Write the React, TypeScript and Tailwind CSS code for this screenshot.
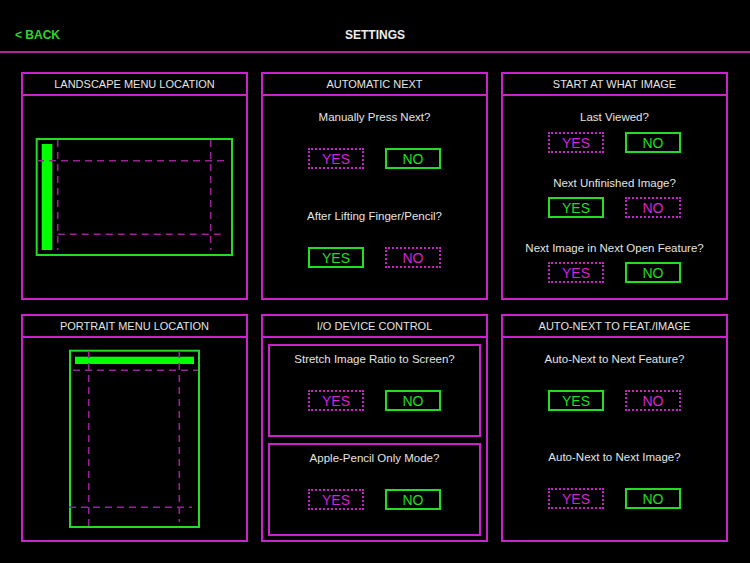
import React from "react";

const FONT = { fontFamily: '"Liberation Sans", Arial, sans-serif' };

function Btn({ label, on }: { label: string; on: boolean }) {
  return (
    <div
      className={
        on
          ? "w-[56px] h-[21px] border-2 border-solid border-[#22dd22] text-[#22dd22] flex items-center justify-center text-[14px] leading-none"
          : "w-[56px] h-[21px] border-2 border-dotted border-[#c422c4] text-[#d424d4] flex items-center justify-center text-[14px] leading-none"
      }
    >
      {label}
    </div>
  );
}

function Pair({ yes }: { yes: boolean }) {
  return (
    <div className="flex justify-center gap-[21px]">
      <Btn label="YES" on={yes} />
      <Btn label="NO" on={!yes} />
    </div>
  );
}

function Q({ children }: { children: React.ReactNode }) {
  return (
    <div className="text-center text-[11.5px] leading-[14px] text-[#e4e4e4]">{children}</div>
  );
}

function Panel({ title, children }: { title: string; children: React.ReactNode }) {
  return (
    <div className="h-[228px] border-2 border-[#cc22cc] flex flex-col">
      <div className="h-[22px] border-b-2 border-[#cc22cc] flex items-center justify-center text-[11px] text-[#e4e4e4] leading-none">
        {title}
      </div>
      <div className="flex-1 relative">{children}</div>
    </div>
  );
}

const DASH = "#9c1f9c";

function Landscape() {
  return (
    <svg width="223" height="202" className="block">
      <rect x="13.7" y="43" width="195.3" height="116" fill="none" stroke="#22dd22" strokeWidth="2" />
      <rect x="18.7" y="48" width="10.6" height="106" fill="#00ff00" />
      <g stroke={DASH} strokeWidth="1.6" strokeDasharray="7 5" fill="none">
        <line x1="34.7" y1="44" x2="34.7" y2="154" />
        <line x1="187.7" y1="44" x2="187.7" y2="154" />
        <line x1="14" y1="64.7" x2="206" y2="64.7" />
        <line x1="34.7" y1="138.3" x2="202" y2="138.3" />
      </g>
    </svg>
  );
}

function Portrait() {
  return (
    <svg width="223" height="202" className="block">
      <rect x="47" y="12.7" width="129" height="176.3" fill="none" stroke="#22dd22" strokeWidth="2" />
      <rect x="52" y="18.7" width="119" height="7.3" fill="#00ff00" />
      <g stroke={DASH} strokeWidth="1.6" strokeDasharray="7 5" fill="none">
        <line x1="65.7" y1="13" x2="65.7" y2="188" />
        <line x1="156.3" y1="13" x2="156.3" y2="184" />
        <line x1="50" y1="32.3" x2="175" y2="32.3" />
        <line x1="46" y1="169.3" x2="169" y2="169.3" />
      </g>
    </svg>
  );
}

export default function App() {
  return (
    <div className="w-[750px] h-[563px] bg-black overflow-hidden" style={FONT}>
      <div className="h-[53px] border-b-2 border-[#b0249c] relative flex items-center justify-center pt-[19px]">
        <div className="absolute left-[15px] top-[28px] text-[12px] leading-[14px] font-bold text-[#2bd42b]">
          &lt; BACK
        </div>
        <div className="text-[12px] leading-[14px] font-bold text-[#ececec]">SETTINGS</div>
      </div>

      <div className="mt-[19px] ml-[21px] grid grid-cols-[227px_227px_227px] gap-x-[13px] gap-y-[14px]">
        <Panel title="LANDSCAPE MENU LOCATION">
          <Landscape />
        </Panel>

        <Panel title="AUTOMATIC NEXT">
          <div className="pt-[14px]">
            <Q>Manually Press Next?</Q>
            <div className="mt-[24px]">
              <Pair yes={false} />
            </div>
            <div className="mt-[40px]">
              <Q>After Lifting Finger/Pencil?</Q>
            </div>
            <div className="mt-[24px]">
              <Pair yes={true} />
            </div>
          </div>
        </Panel>

        <Panel title="START AT WHAT IMAGE">
          <div className="pt-[14px]">
            <Q>Last Viewed?</Q>
            <div className="mt-[8px]">
              <Pair yes={false} />
            </div>
            <div className="mt-[23px]">
              <Q>Next Unfinished Image?</Q>
            </div>
            <div className="mt-[7px]">
              <Pair yes={true} />
            </div>
            <div className="mt-[23px]">
              <Q>Next Image in Next Open Feature?</Q>
            </div>
            <div className="mt-[7px]">
              <Pair yes={false} />
            </div>
          </div>
        </Panel>

        <Panel title="PORTRAIT MENU LOCATION">
          <Portrait />
        </Panel>

        <Panel title="I/O DEVICE CONTROL">
          <div className="px-[5px] pt-[6px] flex flex-col gap-[6px]">
            <div className="h-[93px] border-2 border-[#cc22cc] pt-[6px]">
              <Q>Stretch Image Ratio to Screen?</Q>
              <div className="mt-[24px]">
                <Pair yes={false} />
              </div>
            </div>
            <div className="h-[93px] border-2 border-[#cc22cc] pt-[6px]">
              <Q>Apple-Pencil Only Mode?</Q>
              <div className="mt-[24px]">
                <Pair yes={false} />
              </div>
            </div>
          </div>
        </Panel>

        <Panel title="AUTO-NEXT TO FEAT./IMAGE">
          <div className="pt-[14px]">
            <Q>Auto-Next to Next Feature?</Q>
            <div className="mt-[24px]">
              <Pair yes={true} />
            </div>
            <div className="mt-[39px]">
              <Q>Auto-Next to Next Image?</Q>
            </div>
            <div className="mt-[24px]">
              <Pair yes={false} />
            </div>
          </div>
        </Panel>
      </div>
    </div>
  );
}
